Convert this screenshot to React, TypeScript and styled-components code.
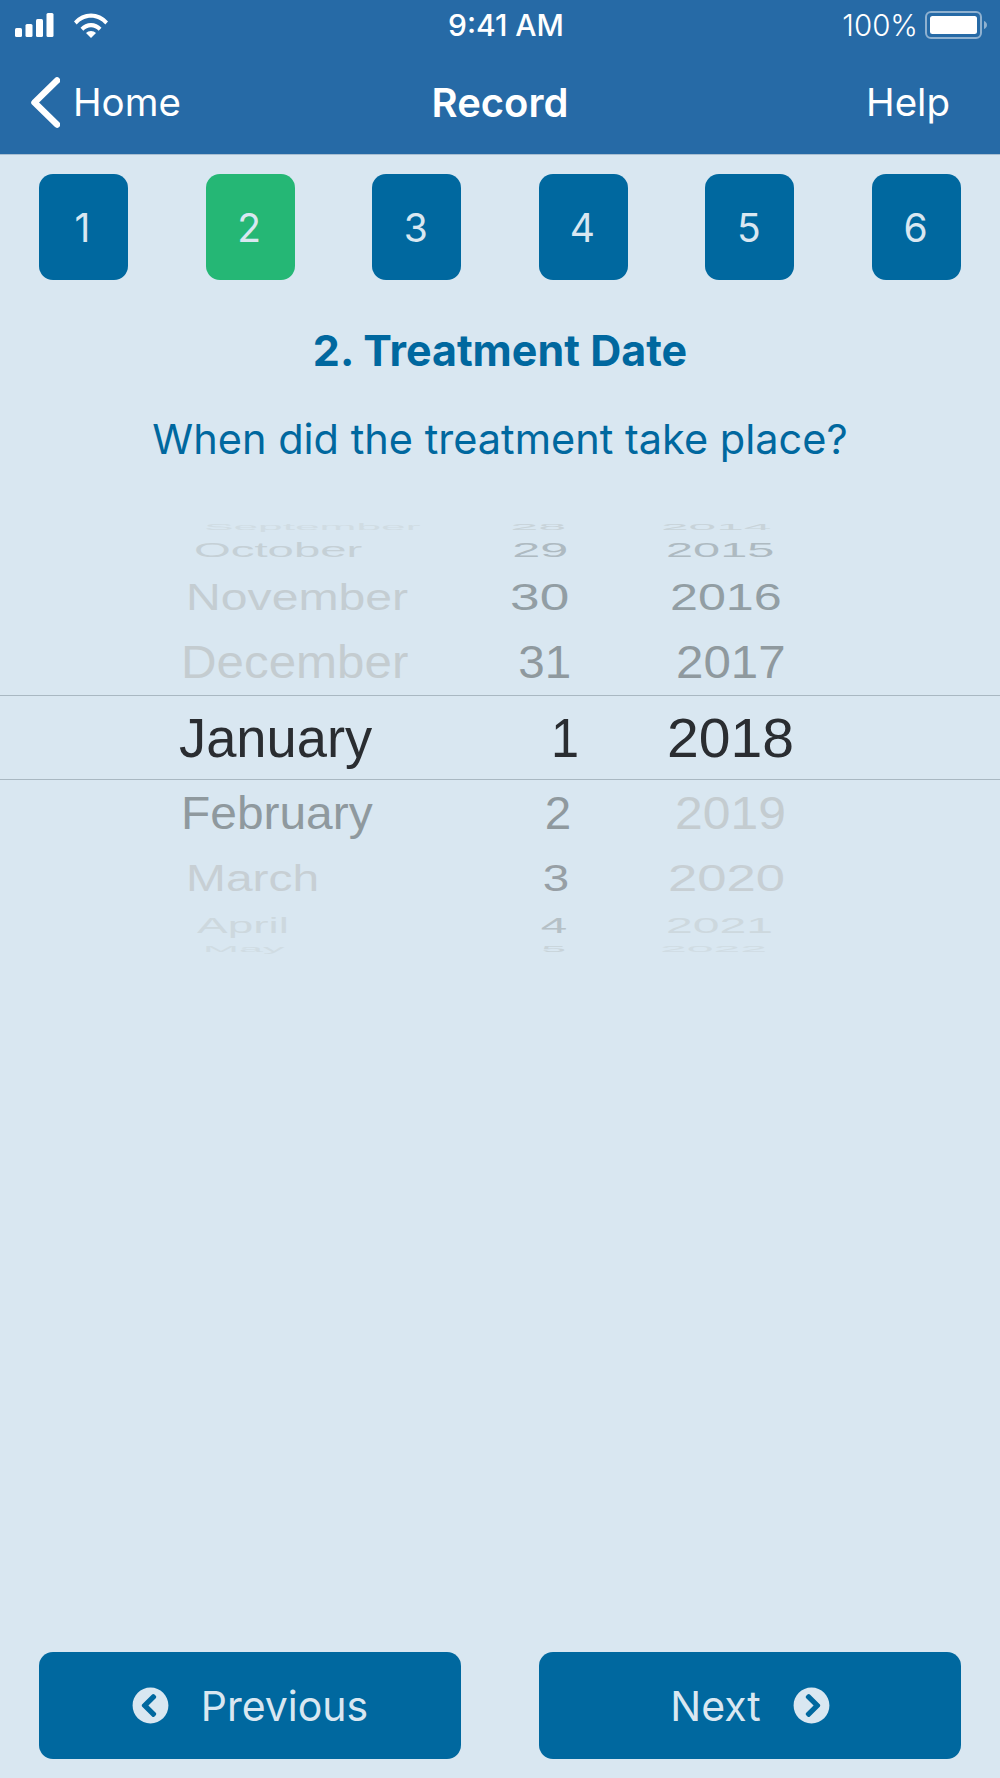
import React from "react";
import styled, { createGlobalStyle } from "styled-components";
import { FaChevronCircleLeft, FaChevronCircleRight } from "react-icons/fa";

const GlobalStyle = createGlobalStyle`
  html, body {
    margin: 0;
    padding: 0;
    background: #d9e7f1;
  }
`;

const Page = styled.div`
  width: 1000px;
  height: 1778px;
  display: flex;
  flex-direction: column;
  background: #d9e7f1;
  font-family: Inter, "Liberation Sans", sans-serif;
  overflow: hidden;
`;
const Header = styled.header`
  height: 155px;
  box-sizing: border-box;
  background: #266aa6;
  border-bottom: 1px solid #a9bfd2;
  color: #fff;
`;
const StatusBar = styled.div`
  height: 50px;
  display: grid;
  grid-template-columns: 1fr auto 1fr;
  align-items: center;
  padding: 0 13px 0 15px;
`;
const StatusLeft = styled.div`
  display: flex;
  align-items: center;
  gap: 20px;
`;
const StatusRight = styled.div`
  display: flex;
  align-items: center;
  justify-content: flex-end;
  gap: 7px;
  font-size: 29.500px;
  font-weight: 300;
`;
const Clock = styled.span`
  margin-left: 10px;
  font-size: 30px;
  font-weight: 500;
`;
const NavBar = styled.nav`
  height: 104px;
  display: grid;
  grid-template-columns: 1fr auto 1fr;
  align-items: center;
  padding-bottom: 16px;
  font-size: 38.500px;
`;
const BackLink = styled.div`
  display: flex;
  align-items: center;
  gap: 13px;
  padding-left: 31px;
`;
const NavTitle = styled.div`
  font-size: 40px;
  font-weight: 600;
`;
const HelpLink = styled.div`
  justify-self: end;
  padding-right: 50px;
`;
const Steps = styled.div`
  display: flex;
  justify-content: space-between;
  padding: 19px 39px 0;
`;
const Step = styled.div<{ $active?: boolean }>`
  width: 89px;
  height: 106px;
  border-radius: 14px;
  display: flex;
  align-items: center;
  justify-content: center;
  background: ${({ $active }) => ($active ? "#25b775" : "#00689f")};
  color: #d9e7f1;
  font-size: 39px;
  padding-right: 2px;
  box-sizing: border-box;
`;
const Title = styled.h1`
  margin: 47px 0 0;
  text-align: center;
  font-size: 43px;
  line-height: 46px;
  font-weight: 700;
  color: #00689f;
`;
const Question = styled.p`
  margin: 43px 0 0;
  text-align: center;
  font-size: 41.500px;
  line-height: 46px;
  font-weight: 400;
  color: #00689f;
`;
const Picker = styled.div`
  margin-top: 58px;
  font-family: "Liberation Sans", Arial, sans-serif;
  font-size: 56px;
`;
const WheelRow = styled.div<{ $h: number; $selected?: boolean }>`
  height: ${({ $h }) => $h}px;
  box-sizing: border-box;
  display: grid;
  grid-template-columns: 215px 180px 1fr;
  grid-template-rows: 100%;
  align-items: center;
  padding-left: 180px;
  ${({ $selected }) => ($selected ? "border-top: 1px solid #a9b8c2; border-bottom: 1px solid #a9b8c2;" : "")}
`;
const Cell = styled.div<{ $dx: number; $sx: number; $sy: number; $c: string }>`
  line-height: 1;
  white-space: nowrap;
  color: ${({ $c }) => $c};
  transform: translateX(${({ $dx }) => $dx}px) scale(${({ $sx }) => $sx}, ${({ $sy }) => $sy});
`;
const MonthCell = styled(Cell)`
  justify-self: start;
  transform-origin: left center;
`;
const DayCell = styled(Cell)`
  justify-self: end;
  transform-origin: right center;
`;
const YearCell = styled(Cell)`
  justify-self: start;
  margin-left: 85px;
  transform-origin: left center;
`;
const Spacer = styled.div`
  flex: 1;
`;
const Footer = styled.div`
  display: flex;
  justify-content: space-between;
  padding: 0 39px 19px;
`;
const NavButton = styled.button`
  width: 422px;
  height: 107px;
  border: none;
  border-radius: 14px;
  background: #00689f;
  color: #d9e7f1;
  font-family: inherit;
  font-size: 41px;
  display: flex;
  align-items: center;
  justify-content: center;
  gap: 32px;
  padding: 0;
`;

type Part = [string, number, number, string];
type Row = { h: number; sy: number; selected?: boolean; month: Part; day: Part; year: Part };

const DARK = "#2a2d31";
const rows: Row[] = [
  { h: 14, sy: 0.15, month: ["September", 24, 0.79, "#d0dce3"], day: ["28", -9, 0.9, "#c8d3d9"], year: ["2014", 1, 0.886, "#c8d3d9"] },
  { h: 32, sy: 0.375, month: ["October", 14, 0.845, "#c5d0d6"], day: ["29", -7, 0.9, "#aebac1"], year: ["2015", 6, 0.87, "#aebac1"] },
  { h: 62, sy: 0.675, month: ["November", 6, 0.86, "#c4cdd2"], day: ["30", -6, 0.95, "#929ea4"], year: ["2016", 10, 0.897, "#929ea4"] },
  { h: 67, sy: 0.825, month: ["December", 1, 0.88, "#c4ccd0"], day: ["31", -4, 0.85, "#8f999e"], year: ["2017", 16, 0.88, "#8f999e"] },
  { h: 85, sy: 1, selected: true, month: ["January", -1, 0.97, DARK], day: ["1", 4, 0.9, DARK], year: ["2018", 7, 1.02, DARK] },
  { h: 66, sy: 0.825, month: ["February", 1, 0.855, "#8f999e"], day: ["2", -4, 0.85, "#8f999e"], year: ["2019", 15, 0.89, "#c4ccd0"] },
  { h: 66, sy: 0.65, month: ["March", 6, 0.855, "#c7cfd4"], day: ["3", -6, 0.85, "#979fa5"], year: ["2020", 8, 0.94, "#c7cfd4"] },
  { h: 26, sy: 0.4, month: ["April", 17, 0.82, "#cdd8de"], day: ["4", -8, 0.85, "#b5c0c6"], year: ["2021", 6, 0.86, "#cdd8de"] },
  { h: 22, sy: 0.15, month: ["May", 23, 0.77, "#d0dce3"], day: ["5", -9, 0.8, "#c8d3d9"], year: ["2022", 0, 0.86, "#d0dce3"] },
];

const SignalIcon = () => (
  <svg width="39" height="24" viewBox="0 0 39 24" fill="#fff">
    <rect x="0" y="15" width="7" height="9" rx="1.5" />
    <rect x="10.5" y="11" width="7" height="13" rx="1.5" />
    <rect x="21" y="6" width="7" height="18" rx="1.5" />
    <rect x="31.5" y="0" width="7" height="24" rx="1.5" />
  </svg>
);

const WifiIcon = () => (
  <svg width="34" height="25" viewBox="0 0 34 25" fill="#fff">
    <path d="M0 8.500C4.500 3.200 10.500 0.500 17 0.500s12.500 2.700 17 8l-2.700 3C27.500 7 22.500 4.700 17 4.700S6.500 7 2.700 11.500z" />
    <path d="M6.500 14.800C9.300 11.700 13 10 17 10s7.700 1.700 10.500 4.800l-2.800 3C22.600 15.600 19.900 14.300 17 14.300s-5.600 1.300-7.700 3.500z" />
    <path d="M12 20c1.300-1.400 3.100-2.100 5-2.100s3.700 0.700 5 2.100l-5 5z" />
  </svg>
);

const BatteryIcon = () => (
  <svg width="62" height="28" viewBox="0 0 62 28">
    <rect x="1" y="1" width="55" height="26" rx="5" fill="none" stroke="#8fb1d0" strokeWidth="2" />
    <rect x="5" y="5" width="47" height="18" rx="2.500" fill="#fff" />
    <path d="M59 10c1.500 0.500 3 2 3 4s-1.500 3.500-3 4z" fill="#8fb1d0" />
  </svg>
);

const BackChevron = () => (
  <svg width="29" height="51" viewBox="0 0 29 51" fill="none">
    <path d="M26 3.500L3.500 25.500L26 47.500" stroke="#fff" strokeWidth="6.500" strokeLinecap="round" strokeLinejoin="round" />
  </svg>
);

export default function App() {
  return (
    <Page>
      <GlobalStyle />
      <Header>
        <StatusBar>
          <StatusLeft>
            <SignalIcon />
            <WifiIcon />
          </StatusLeft>
          <Clock>9:41 AM</Clock>
          <StatusRight>
            100%
            <BatteryIcon />
          </StatusRight>
        </StatusBar>
        <NavBar>
          <BackLink>
            <BackChevron />
            Home
          </BackLink>
          <NavTitle>Record</NavTitle>
          <HelpLink>Help</HelpLink>
        </NavBar>
      </Header>
      <Steps>
        {[1, 2, 3, 4, 5, 6].map((n) => (
          <Step key={n} $active={n === 2}>
            {n}
          </Step>
        ))}
      </Steps>
      <Title>2. Treatment Date</Title>
      <Question>When did the treatment take place?</Question>
      <Picker>
        {rows.map((r) => (
          <WheelRow key={r.month[0]} $h={r.h} $selected={r.selected}>
            <MonthCell $dx={r.month[1]} $sx={r.month[2]} $sy={r.sy} $c={r.month[3]}>
              {r.month[0]}
            </MonthCell>
            <DayCell $dx={r.day[1]} $sx={r.day[2]} $sy={r.sy} $c={r.day[3]}>
              {r.day[0]}
            </DayCell>
            <YearCell $dx={r.year[1]} $sx={r.year[2]} $sy={r.sy} $c={r.year[3]}>
              {r.year[0]}
            </YearCell>
          </WheelRow>
        ))}
      </Picker>
      <Spacer />
      <Footer>
        <NavButton>
          <FaChevronCircleLeft size={37} />
          Previous
        </NavButton>
        <NavButton>
          Next
          <FaChevronCircleRight size={37} />
        </NavButton>
      </Footer>
    </Page>
  );
}
